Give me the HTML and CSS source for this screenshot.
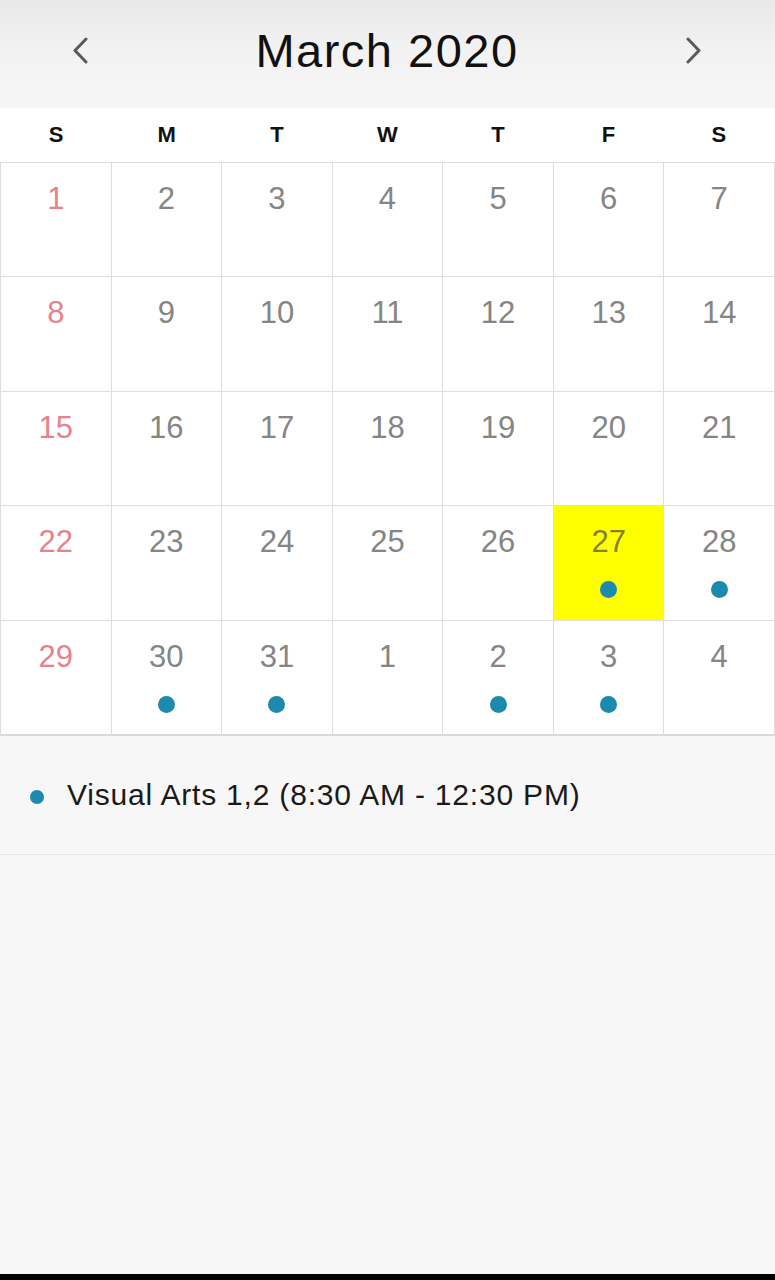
FILE: index.html
```html
<!DOCTYPE html>
<html lang="en">
<head>
<meta charset="utf-8">
<title>March 2020</title>
<link rel="stylesheet" href="styles.css">
</head>
<body>
<div class="page">
  <header class="month-bar">
    <button class="nav" aria-label="Previous month">
      <svg width="18" height="27" viewBox="0 0 18 27"><path d="M15 2 L4 13.5 L15 25" fill="none" stroke="#5a5a5a" stroke-width="3" stroke-linecap="round" stroke-linejoin="round"/></svg>
    </button>
    <h1 class="title">March 2020</h1>
    <button class="nav" aria-label="Next month">
      <svg width="18" height="27" viewBox="0 0 18 27"><path d="M3 2 L14 13.5 L3 25" fill="none" stroke="#5a5a5a" stroke-width="3" stroke-linecap="round" stroke-linejoin="round"/></svg>
    </button>
  </header>

  <div class="weekdays">
    <span>S</span><span>M</span><span>T</span><span>W</span><span>T</span><span>F</span><span>S</span>
  </div>

  <div class="grid">
    <div class="cell sun"><span class="num">1</span></div>
    <div class="cell"><span class="num">2</span></div>
    <div class="cell"><span class="num">3</span></div>
    <div class="cell"><span class="num">4</span></div>
    <div class="cell"><span class="num">5</span></div>
    <div class="cell"><span class="num">6</span></div>
    <div class="cell"><span class="num">7</span></div>

    <div class="cell sun"><span class="num">8</span></div>
    <div class="cell"><span class="num">9</span></div>
    <div class="cell"><span class="num">10</span></div>
    <div class="cell"><span class="num">11</span></div>
    <div class="cell"><span class="num">12</span></div>
    <div class="cell"><span class="num">13</span></div>
    <div class="cell"><span class="num">14</span></div>

    <div class="cell sun"><span class="num">15</span></div>
    <div class="cell"><span class="num">16</span></div>
    <div class="cell"><span class="num">17</span></div>
    <div class="cell"><span class="num">18</span></div>
    <div class="cell"><span class="num">19</span></div>
    <div class="cell"><span class="num">20</span></div>
    <div class="cell"><span class="num">21</span></div>

    <div class="cell sun"><span class="num">22</span></div>
    <div class="cell"><span class="num">23</span></div>
    <div class="cell"><span class="num">24</span></div>
    <div class="cell"><span class="num">25</span></div>
    <div class="cell"><span class="num">26</span></div>
    <div class="cell today"><span class="num">27</span><span class="dot"></span></div>
    <div class="cell"><span class="num">28</span><span class="dot"></span></div>

    <div class="cell sun"><span class="num">29</span></div>
    <div class="cell"><span class="num">30</span><span class="dot"></span></div>
    <div class="cell"><span class="num">31</span><span class="dot"></span></div>
    <div class="cell"><span class="num">1</span></div>
    <div class="cell"><span class="num">2</span><span class="dot"></span></div>
    <div class="cell"><span class="num">3</span><span class="dot"></span></div>
    <div class="cell"><span class="num">4</span></div>
  </div>

  <ul class="events">
    <li class="event"><span class="event-dot"></span><span class="event-text">Visual Arts 1,2 (8:30 AM - 12:30 PM)</span></li>
  </ul>

  <div class="home-bar"></div>
</div>
</body>
</html>
```

FILE: styles.css
```css
* { box-sizing: border-box; }

html, body {
  margin: 0;
  padding: 0;
  background: #f7f7f7;
  font-family: "Liberation Sans", Arial, sans-serif;
}

.page {
  height: 1280px;
  display: flex;
  flex-direction: column;
  background: #f7f7f7;
}

.month-bar {
  height: 108px;
  display: flex;
  align-items: center;
  justify-content: space-between;
  padding: 0 72px 8px 71px;
  background: linear-gradient(#e8e8e8 0%, #f2f2f2 45%, #f6f6f6 100%);
}

.nav {
  border: 0;
  background: none;
  padding: 0;
  width: 18px;
  height: 27px;
  display: flex;
}

.title {
  margin: 0;
  font-size: 47px;
  font-weight: 400;
  color: #111;
  letter-spacing: 1.5px;
}

.weekdays {
  height: 54px;
  background: #fff;
  display: grid;
  grid-template-columns: repeat(7, 1fr);
  align-items: center;
  padding: 0 1px;
}

.weekdays span {
  text-align: center;
  font-size: 22px;
  font-weight: 700;
  color: #111;
}

.grid {
  display: grid;
  grid-template-columns: repeat(7, 1fr);
  grid-template-rows: repeat(5, 113.4px);
  gap: 1px;
  background: #dedede;
  border: 1px solid #dedede;
  border-bottom: 2px solid #dadada;
}

.cell {
  background: #fff;
  display: flex;
  flex-direction: column;
  align-items: center;
  padding-top: 20px;
}

.num {
  font-size: 31px;
  line-height: 1;
  color: #858585;
}

.sun .num { color: #e7828b; }

.today { background: #ffff00; }
.today .num { color: #83832f; }

.dot {
  width: 17px;
  height: 17px;
  border-radius: 50%;
  background: #1b8aae;
  margin-top: 24px;
}

.events {
  list-style: none;
  margin: 0;
  padding: 0;
  border-bottom: 1px solid #e6e6e6;
}

.event {
  height: 118px;
  display: flex;
  align-items: center;
  padding-left: 30px;
}

.event-dot {
  width: 14px;
  height: 14px;
  border-radius: 50%;
  background: #1b8aae;
  margin-top: 4px;
  margin-right: 23px;
}

.event-text {
  font-size: 30px;
  color: #1a1a1a;
  letter-spacing: 0.8px;
}

.home-bar {
  margin-top: auto;
  height: 6px;
  background: #000;
}
```
